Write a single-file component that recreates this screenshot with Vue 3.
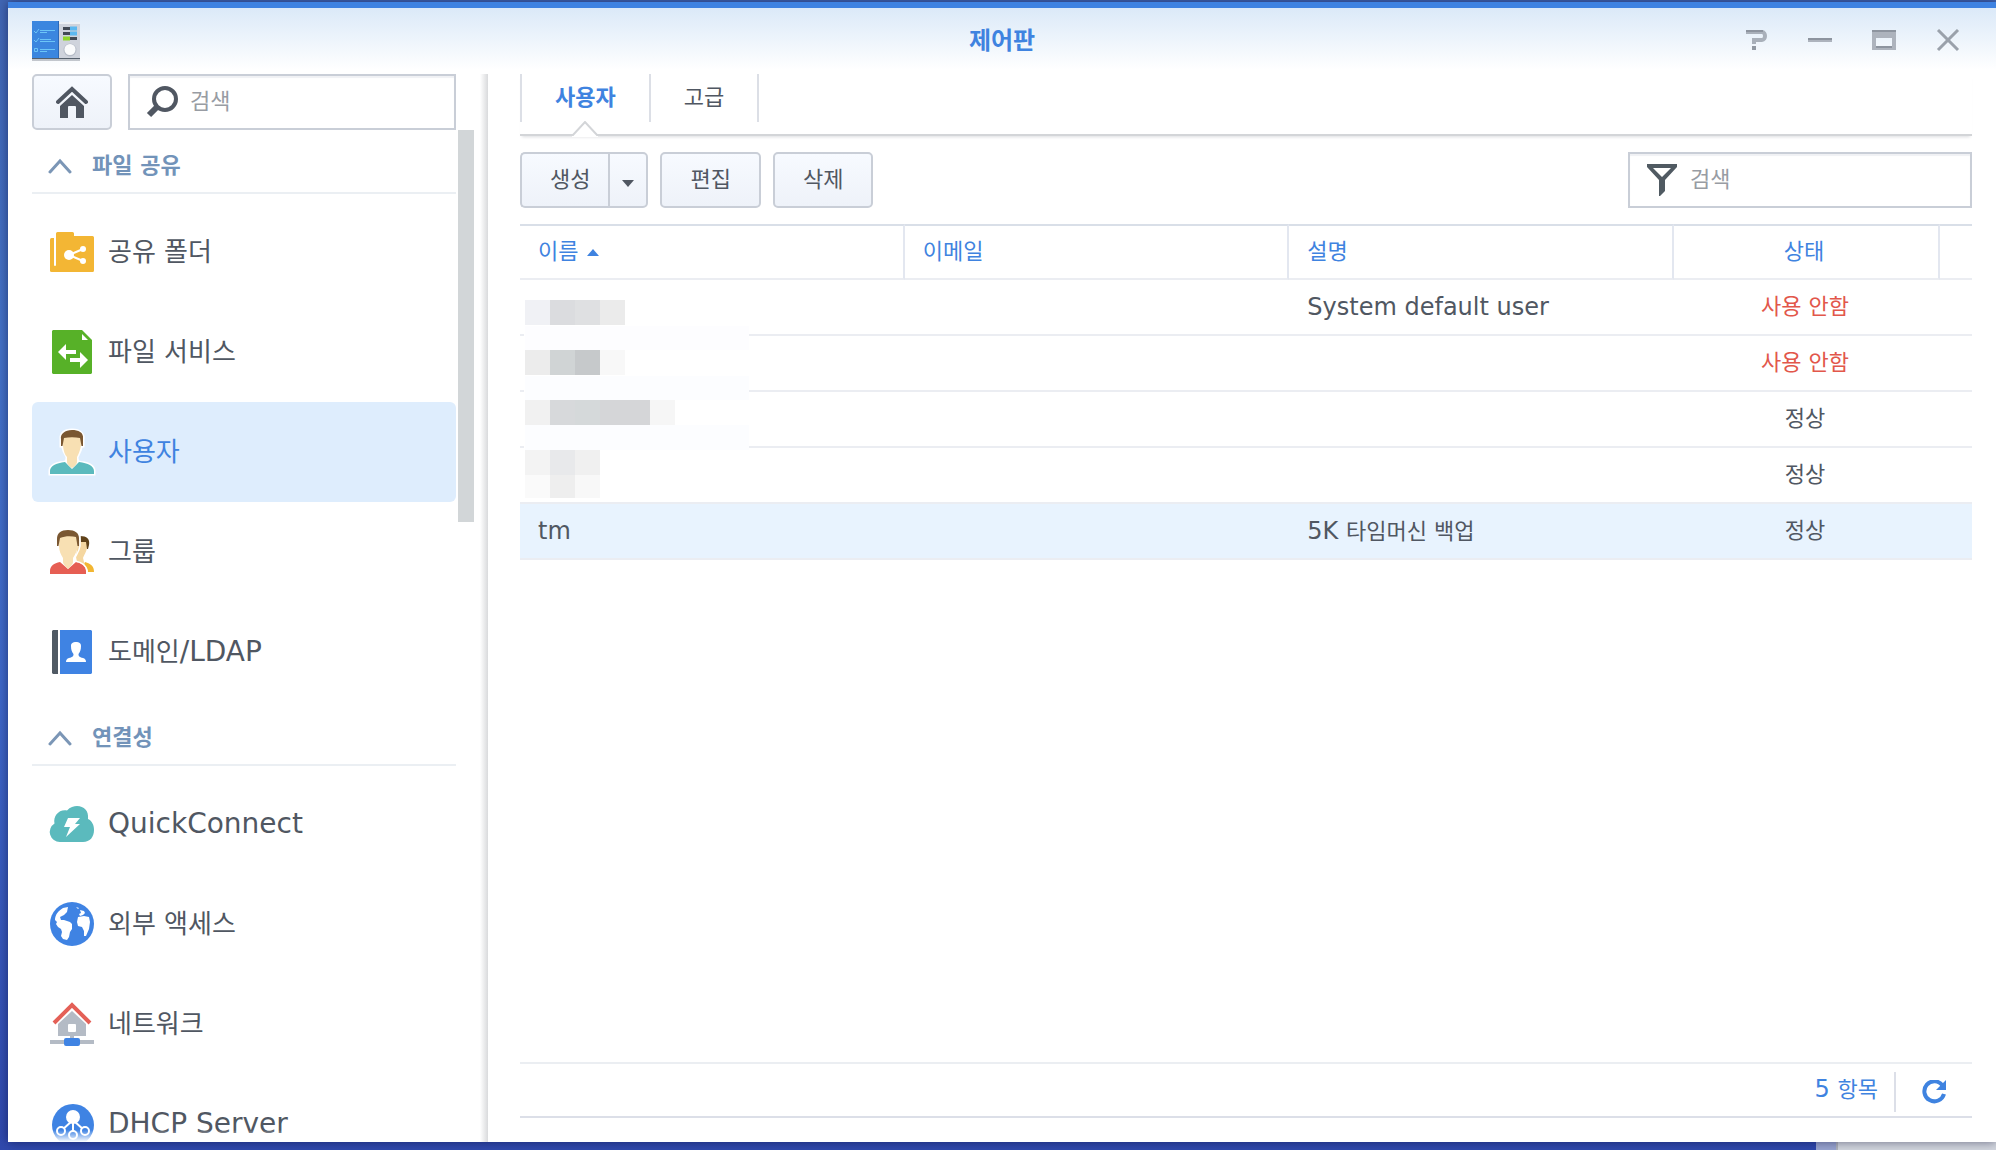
<!-- App.vue -->
<template>
  <div class="desktop">
    <!-- shared icon shapes -->
    <svg class="sprite" aria-hidden="true">
      <symbol id="icon-folder" viewBox="0 0 44 44">
        <rect x="0" y="8" width="8" height="34" rx="1.5" fill="#f3b634" />
        <path d="M6 3.5A1.5 1.5 0 0 1 7.500 2H22.500A1.500 1.500 0 0 1 24 3.500V6H42.500A1.500 1.500 0 0 1 44 7.500V40.500A1.500 1.500 0 0 1 42.500 42H6Z" fill="#f3b634" />
        <rect x="4" y="7" width="2" height="29" rx="1" fill="#fff" />
        <path d="M33 19L19 25L33 31" fill="none" stroke="#fff" stroke-width="2" />
        <circle cx="19" cy="25" r="5" fill="#fff" />
        <circle cx="33" cy="19" r="3" fill="#fff" />
        <circle cx="33" cy="31" r="3" fill="#fff" />
      </symbol>
      <symbol id="icon-file" viewBox="0 0 44 44">
        <path d="M3 0H32L42 10V43L41 44H3L2 43V1Z" fill="#57b128" />
        <path d="M32 4V10H38Z" fill="#fff" />
        <path d="M8 22L16 14V20H26V24H16V30Z" fill="#fff" />
        <path d="M38 30L30 38V32H20V28H30V22Z" fill="#fff" />
      </symbol>
      <symbol id="icon-user" viewBox="0 0 44 44">
        <path
          d="M11 10C10 3 15 0 22 0C30 0 34 4 33 10V16H31.500C30.500 21 28.500 24 27 27C27 31 28 32 31 32.500C39 33.500 44 36 44 41V44H0V41C0 36 5 33.500 13 32.500C16 32 17 31 17 27C15 24 13.500 21 12.500 16H11Z"
          fill="#fff" stroke="#fff" stroke-width="3"
        />
        <path d="M0 41C0 36 6 33 15 32L22 39L29 32C38 33 44 36 44 41V44H0Z" fill="#5bbabd" />
        <path d="M13 8C17 5 27 5 31 8V16C30 21 28 25 27 27V32C27 34 24 37 22 38C20 37 17 34 17 32V27C15 25 13.500 21 13 16Z" fill="#f8e0b3" />
        <path d="M11 16V9C10 4 15 0 22 0C28 0 34 2 33 9V16H31.500L30 8C25 7 19 7 14 8L12.500 16Z" fill="#7a5731" />
      </symbol>
      <symbol id="icon-group" viewBox="0 0 44 44">
        <path d="M28 10H37V18C36 23 34 25 33 28L34 32L38 40L27 32L26 27Z" fill="#f5d7a0" />
        <path d="M30 6C37 6 40 9 39 15L38 19H37L36 12H31Z" fill="#604219" />
        <path d="M35 32C41 34 44 36 44 42H38C38 38 36 36 34 35Z" fill="#f2b632" />
        <path d="M0 41C0 36 4 33 10 32L18 39L26 32C32 33 36 36 36 41V44H0Z" fill="#e65e53" />
        <path d="M9 8C13 5 24 5 28 8L28 16C27 21 25 25 23 28V32C23 34 20 37 18 39C16 37 13 34 13 32V28C11 25 9 21 9 16Z" fill="#f8e0b3" />
        <path d="M7 16V9C7 3 11 0 18 0C25 0 29 3 29 8V16H27.500L26 7C21 6 15 6 10 8L8.500 16Z" fill="#7a5731" />
        <path d="M30 5V16C29 22 26 25 25 28V31C31 32 36 34 37 41" fill="none" stroke="#fff" stroke-width="1.5" />
      </symbol>
      <symbol id="icon-domain" viewBox="0 0 44 44">
        <path d="M3 0H8V44H3L2 43V1Z" fill="#505a64" />
        <path d="M10 0H41L42 1V43L41 44H10Z" fill="#3f83e3" />
        <path d="M21 16C21 13 23 12 26 12C29 12 31 13 31 16C31 20 30 22 28.500 24C28.500 27 30 27 33 28C35 28.500 36 30 36 32H16C16 30 17 28.500 19 28C22 27 23.500 27 23.500 24C22 22 21 20 21 16Z" fill="#fff" />
      </symbol>
      <symbol id="icon-cloud" viewBox="0 0 44 44">
        <path d="M10 40A10 10 0 0 1 4.500 21.500C3 14 9 7 17 8.500C20 5 24 4 27 4C34 4 39 9 38 17C42 19 44 23 44 28C44 35 40 40 33 40Z" fill="#5bbabd" />
        <path d="M18 16H30L25 22H30L16 35L20 25H14Z" fill="#fff" />
      </symbol>
      <symbol id="icon-globe" viewBox="0 0 44 44">
        <circle cx="22" cy="22" r="22" fill="#3f83e3" />
        <path d="M18 5L13 6C8 9 5 13 5 18L7 20L6 22L8 25L11 27L12 30L11 34L13 37L17 38L19 35L20 30L22 27V22L20 20L14 18L11 18L10 15L14 13L17 10Z" fill="#fff" />
        <path d="M28 15L34 14L39 15L40 20L39 27L36 34L34 34L34 29L32 25L28 24L27 20Z" fill="#fff" />
        <path d="M26 5L29 6L28 7ZM30 8L34 9L35 11L33 13L30 14L29 12L31 11Z" fill="#fff" />
      </symbol>
      <symbol id="icon-network" viewBox="0 0 44 44">
        <path d="M22 9L36 22V34H24V38H44V42H0V38H20V34H8V22Z" fill="#b4bbc5" />
        <rect x="18" y="22" width="8" height="8" rx="1" fill="#fff" />
        <path d="M4 21L22 3L40 21" fill="none" stroke="#e46057" stroke-width="4" />
        <rect x="14" y="36" width="16" height="8" rx="2" fill="#3f83e3" />
      </symbol>
      <symbol id="icon-dhcp" viewBox="0 0 44 44">
        <circle cx="23" cy="23" r="21" fill="#3f83e3" />
        <path d="M23 15V33M23 18L11 29M23 18L35 29" stroke="#fff" stroke-width="2" />
        <circle cx="23" cy="15" r="7" fill="#fff" />
        <g fill="#3f83e3" stroke="#fff" stroke-width="2">
          <circle cx="11" cy="29" r="4" />
          <circle cx="35" cy="29" r="4" />
          <circle cx="23" cy="33" r="4" />
        </g>
      </symbol>
    </svg>

    <div class="window">
      <header class="titlebar">
        <svg class="app-icon" viewBox="0 0 48 40" aria-hidden="true">
          <rect x="0" y="37" width="48" height="3" fill="#8b929c" opacity="0.5" />
          <rect x="26" y="1" width="22" height="37" fill="#cfd3dc" />
          <rect x="26" y="1" width="22" height="2" fill="#eef1f5" />
          <rect x="0" y="0" width="27" height="38" fill="#3b86df" />
          <rect x="26" y="0" width="1" height="38" fill="#2b68b8" />
          <rect x="0" y="37" width="48" height="1" fill="#56606c" />
          <path d="M2 10L4 12L7 8M2 19L4 21L7 17M2.500 27.500H5.500V30.500H2.500Z" fill="none" stroke="#6cc5f7" />
          <path d="M8 9.500H23M8 11.500H15M8 18.500H19M8 20.500H23M8 28.500H23M8 30.500H15" stroke="#6cc5f7" />
          <path d="M31 7.500H39M31 12.500H39M38 17.500H45" stroke="#434a55" stroke-width="3" />
          <path d="M38 7.500H45M38 12.500H45" stroke="#5cb8f0" stroke-width="4" />
          <path d="M31 17.500H38" stroke="#8fd629" stroke-width="4" />
          <circle cx="38" cy="29" r="6.500" fill="#b7bdc8" />
          <circle cx="38" cy="28.500" r="5.500" fill="#fafbfc" />
        </svg>
        <h1 class="title">제어판</h1>
        <div class="controls">
          <button class="control" aria-label="도움말">
            <svg viewBox="0 1 24 24">
              <path d="M2 4H18C22 4 22 12 18 12H10V16" fill="none" stroke="#a9b0ba" stroke-width="4" />
              <path d="M2 3H19" stroke="#8d949f" stroke-width="2" />
              <rect x="8" y="18" width="4" height="4" fill="#9299a3" />
            </svg>
          </button>
          <button class="control" aria-label="최소화">
            <svg viewBox="0 1 24 24">
              <rect x="0" y="10" width="24" height="2" fill="#8d949f" />
              <rect x="0" y="12" width="24" height="2" fill="#adb3bd" />
            </svg>
          </button>
          <button class="control" aria-label="최대화">
            <svg viewBox="0 1 24 24">
              <path d="M0 2H24V22H0ZM4 10V20H20V10Z" fill="#adb3bd" fill-rule="evenodd" />
              <path d="M0 3H24M4 19H20" stroke="#8d949f" stroke-width="2" />
            </svg>
          </button>
          <button class="control" aria-label="닫기">
            <svg viewBox="0 1 24 24">
              <path d="M2 2L22 22M22 2L2 22" stroke="#9aa1ab" stroke-width="3" />
            </svg>
          </button>
        </div>
      </header>

      <div class="content">
        <aside class="sidebar">
          <div class="sidebar-top">
            <button class="button home" aria-label="홈">
              <svg viewBox="0 0 32 32">
                <path d="M2 16L16 3L30 16" fill="none" stroke="#505762" stroke-width="4" stroke-linecap="round" />
                <path d="M4 20L16 9L28 20V32H20V21Q20 20 19 20H13Q12 20 12 21V32H4Z" fill="#505762" />
              </svg>
            </button>
            <label class="search">
              <svg viewBox="0 0 32 32" aria-hidden="true">
                <circle cx="19" cy="13" r="11" fill="none" stroke="#505762" stroke-width="4" />
                <path d="M11 21L3 29" stroke="#505762" stroke-width="6" />
              </svg>
              <input v-model="query" type="text" placeholder="검색" aria-label="설정 검색">
            </label>
          </div>
          <div class="sidebar-scroll">
            <nav class="nav">
              <section v-for="section in sections" :key="section.title" class="section">
                <button class="section-header" @click="section.open = !section.open">
                  <svg viewBox="0 0 24 16" :class="{ closed: !section.open }" aria-hidden="true">
                    <path d="M2 14L12 3L22 14" />
                  </svg>
                  <span>{{ section.title }}</span>
                </button>
                <template v-if="section.open">
                  <a
                    v-for="item in section.items"
                    :key="item.icon"
                    href="#"
                    class="nav-item"
                    :class="{ active: item.icon === current }"
                    @click.prevent="current = item.icon"
                  >
                    <svg class="nav-icon" aria-hidden="true"><use :href="'#icon-' + item.icon" /></svg>
                    <span>{{ item.label }}<span v-if="item.latin" class="latin">{{ item.latin }}</span></span>
                  </a>
                </template>
              </section>
            </nav>
            <div class="track"><div class="thumb" /></div>
          </div>
        </aside>

        <main class="main">
          <div class="tabs">
            <button
              v-for="tab in tabs"
              :key="tab"
              class="tab"
              :class="{ active: tab === activeTab }"
              @click="activeTab = tab"
            >
              {{ tab }}
              <svg v-if="tab === activeTab" class="notch" viewBox="0 0 28 16" aria-hidden="true">
                <path d="M1 14L14 1L27 14V16H1Z" fill="#fff" />
                <path d="M0 14H2L14 1L26 14H28" fill="none" stroke="#d3d5d8" stroke-width="2" />
              </svg>
            </button>
          </div>

          <div class="toolbar">
            <div class="split">
              <button class="button create">생성</button>
              <button class="button arrow" aria-label="생성 메뉴"><i class="caret down" /></button>
            </div>
            <button class="button">편집</button>
            <button class="button">삭제</button>
            <label class="search filter">
              <svg viewBox="0 0 32 32" aria-hidden="true">
                <path d="M1 0H31V3L19 16V27L14 32H13V16L1 3ZM7 4L16 13L25 4Z" fill="#505a62" fill-rule="evenodd" />
              </svg>
              <input v-model="filter" type="text" placeholder="검색" aria-label="사용자 검색">
            </label>
          </div>

          <div class="grid">
            <table>
              <thead>
                <tr>
                  <th>이름<i class="caret up" /></th>
                  <th>이메일</th>
                  <th>설명</th>
                  <th class="status">상태</th>
                  <th class="filler" />
                </tr>
              </thead>
              <tbody>
                <tr
                  v-for="(user, i) in users"
                  :key="i"
                  :class="{ selected: i === selected }"
                  @click="selected = i"
                >
                  <td class="latin">{{ user.name }}</td>
                  <td />
                  <td><span class="latin">{{ user.latin }}</span>{{ user.description }}</td>
                  <td class="status" :class="{ disabled: user.disabled }">{{ user.disabled ? '사용 안함' : '정상' }}</td>
                  <td />
                </tr>
              </tbody>
            </table>
            <!-- hides the private account names -->
            <svg class="mosaic" viewBox="0 0 225 206" aria-hidden="true">
              <rect width="225" height="206" fill="#fff" />
              <rect
                v-for="(b, i) in blocks"
                :key="i"
                :x="b[0]"
                :y="b[1]"
                :width="b[2]"
                :height="b[3]"
                :fill="b[4]"
              />
            </svg>
          </div>

          <footer class="footer">
            <span class="count"><span class="latin">5 </span>항목</span>
            <button class="refresh" aria-label="새로 고침">
              <svg viewBox="0 0 24 24">
                <path d="M20.500 5.500A10 10 0 1 0 22 14" fill="none" stroke="#3f83e0" stroke-width="4" />
                <path d="M24 0V10H14Z" fill="#3f83e0" />
              </svg>
            </button>
          </footer>
        </main>
      </div>
    </div>
    <div class="behind" />
  </div>
</template>

<script setup>
import { reactive, ref } from 'vue'

const query = ref('')
const filter = ref('')
const current = ref('user')
const selected = ref(4)

const tabs = ['사용자', '고급']
const activeTab = ref(tabs[0])

const sections = reactive([
  {
    title: '파일 공유',
    open: true,
    items: [
      { icon: 'folder', label: '공유 폴더' },
      { icon: 'file', label: '파일 서비스' },
      { icon: 'user', label: '사용자' },
      { icon: 'group', label: '그룹' },
      { icon: 'domain', label: '도메인', latin: '/LDAP' }
    ]
  },
  {
    title: '연결성',
    open: true,
    items: [
      { icon: 'cloud', latin: 'QuickConnect' },
      { icon: 'globe', label: '외부 액세스' },
      { icon: 'network', label: '네트워크' },
      { icon: 'dhcp', latin: 'DHCP Server' }
    ]
  }
])

const users = [
  { latin: 'System default user', disabled: true },
  { disabled: true },
  {},
  {},
  { name: 'tm', latin: '5K ', description: '타임머신 백업' }
]

// x, y, width, height, fill
const blocks = [
  [1, 8, 25, 25, '#f0f1f5'],
  [26, 8, 25, 25, '#dbdcdf'],
  [51, 8, 25, 25, '#dfe0e2'],
  [76, 8, 25, 25, '#ebebeb'],
  [1, 34, 224, 24, '#fdfdff'],
  [1, 58, 25, 25, '#ececec'],
  [26, 58, 25, 25, '#d0d4d5'],
  [51, 58, 25, 25, '#c6c9cb'],
  [76, 58, 25, 25, '#f8f8f8'],
  [1, 84, 224, 24, '#fcfdff'],
  [1, 108, 25, 25, '#f1f1f1'],
  [26, 108, 25, 25, '#d7d9db'],
  [51, 108, 25, 25, '#d5d9da'],
  [76, 108, 50, 25, '#d5d6d8'],
  [126, 108, 25, 25, '#f6f6f6'],
  [1, 133, 224, 25, '#fcfdff'],
  [1, 158, 25, 25, '#f3f3f3'],
  [26, 158, 25, 25, '#e8e9eb'],
  [51, 158, 25, 25, '#f0f0f0'],
  [1, 183, 25, 23, '#fafafa'],
  [26, 183, 25, 23, '#eeeeee'],
  [51, 183, 25, 23, '#f8f8f8']
]
</script>

<style>
body {
  margin: 0;
}
</style>

<style scoped>
* {
  box-sizing: border-box;
}

.desktop {
  background: linear-gradient(#4166b4, #4472c6 30%, #3f68c8 60%, #3049ad);
  color: #505762;
  font-family: "DejaVu Sans", "Noto Sans CJK KR", sans-serif;
  font-size: 22px;
  height: 100vh;
  line-height: 32px;
  overflow: hidden;
  padding: 2px 0 8px 8px;
  position: relative;
}

.sprite {
  height: 0;
  position: absolute;
  width: 0;
}

symbol {
  overflow: visible;
}

button,
input {
  background: none;
  border: 0;
  color: inherit;
  font: inherit;
  padding: 0;
}

button {
  cursor: pointer;
}

svg {
  display: block;
  flex: none;
}

.latin {
  font-size: 24px;
  white-space: pre;
}

.window {
  background: #fff;
  border-top: 6px solid #3e82e1;
  box-shadow: 0 0 10px rgba(0, 0, 40, 0.5);
  display: flex;
  flex-direction: column;
  height: 100%;
  position: relative;
  z-index: 1;
}

/* strip of another window below this one */
.behind {
  background: #d3d7df;
  border-left: 20px solid #9aa6d2;
  bottom: 0;
  box-shadow: inset 2px 0 #b0b4bd;
  height: 8px;
  position: absolute;
  right: 0;
  width: 180px;
}

.titlebar {
  align-items: center;
  background: linear-gradient(#dbe9f8, #fff 62px);
  display: grid;
  grid-template-columns: 1fr auto 1fr;
  height: 66px;
  padding: 0 36px 0 24px;
}

.app-icon {
  height: 40px;
  width: 48px;
}

.title {
  color: #3f83e0;
  font-size: 24px;
  font-weight: bold;
  margin: 0 0 0 12px;
}

.controls {
  display: flex;
  gap: 40px;
  justify-content: flex-end;
}

.control {
  height: 24px;
  width: 24px;
}

.content {
  display: flex;
  flex: 1;
  min-height: 0;
}

.sidebar {
  background: linear-gradient(to left, #d9dadc, #fff 8px);
  display: flex;
  flex: none;
  flex-direction: column;
  padding: 0 14px 0 24px;
  width: 480px;
}

.sidebar-top {
  display: flex;
  gap: 16px;
  margin-right: 18px;
}

.button {
  background: linear-gradient(#f7faff, #eef2f9);
  border: 2px solid #c9ced7;
  border-radius: 5px;
  height: 56px;
  padding: 0 28px;
}

.home {
  display: flex;
  flex: none;
  justify-content: center;
  padding: 10px 0;
  width: 80px;
}

.home svg {
  height: 32px;
  width: 32px;
}

.search {
  align-items: center;
  border: 2px solid #c9ced7;
  box-shadow: inset 0 2px 1px #f0f1f4;
  display: flex;
  flex: 1;
  gap: 12px;
  height: 56px;
  min-width: 0;
  padding: 0 16px;
}

.search svg {
  height: 32px;
  width: 32px;
}

.search input {
  flex: 1;
  min-width: 0;
  outline: 0;
}

.search input::placeholder {
  color: #989ca3;
  opacity: 1;
}

.sidebar-scroll {
  display: flex;
  flex: 1;
  gap: 2px;
  min-height: 0;
  position: relative;
}

.sidebar-scroll::after {
  background: linear-gradient(rgba(255, 255, 255, 0), #fff);
  bottom: 0;
  content: "";
  height: 12px;
  left: 0;
  position: absolute;
  right: 0;
}

.nav {
  flex: 1;
  overflow: hidden;
}

.section-header {
  align-items: center;
  border-bottom: 2px solid #ebeff3;
  color: #7293b9;
  display: flex;
  font-weight: bold;
  gap: 20px;
  height: 64px;
  margin-bottom: 8px;
  padding: 10px 16px 0;
  width: 100%;
}

.section-header svg {
  fill: none;
  height: 16px;
  stroke: #7b96b6;
  stroke-linecap: round;
  stroke-width: 3;
  width: 24px;
}

.section-header .closed {
  transform: rotate(180deg);
}

.nav-item {
  align-items: center;
  border-radius: 6px;
  color: #505762;
  display: flex;
  font-size: 26px;
  gap: 14px;
  height: 100px;
  padding-left: 18px;
  text-decoration: none;
}

.nav-item .latin {
  font-size: 28px;
}

.nav-item.active {
  background: #deedfd;
  color: #3f83e0;
}

.nav-icon {
  height: 44px;
  overflow: visible;
  width: 44px;
}

.track {
  width: 16px;
}

.thumb {
  background: #d2d6d8;
  height: 392px;
}

.main {
  display: flex;
  flex: 1;
  flex-direction: column;
  min-width: 0;
  padding: 0 24px 24px 32px;
}

.tabs {
  border-bottom: 2px solid #d3d5d8;
  box-shadow: 0 3px 3px -2px #dcdde0;
  display: flex;
  height: 62px;
  padding-bottom: 12px;
}

.tab {
  border-left: 2px solid #dcdfe6;
  padding: 0 33px;
  position: relative;
}

.tab:last-child {
  border-right: 2px solid #dcdfe6;
}

.tab.active {
  color: #3f83e0;
  font-weight: bold;
}

.notch {
  height: 16px;
  left: calc(50% - 14px);
  position: absolute;
  top: 47px;
  width: 28px;
}

.toolbar {
  display: flex;
  gap: 12px;
  padding: 16px 0;
}

.split {
  display: flex;
}

.create {
  border-radius: 5px 0 0 5px;
  border-right: 0;
  padding-right: 18px;
}

.arrow {
  border-radius: 0 5px 5px 0;
  padding: 0 12px;
}

.caret {
  border: 6px solid transparent;
  display: inline-block;
  height: 0;
  width: 0;
}

.down {
  border-bottom: 0;
  border-top: 7px solid #505762;
}

.up {
  border-bottom: 7px solid #3f83e0;
  border-top: 0;
  margin-left: 9px;
  vertical-align: 3px;
}

.filter {
  flex: 0 0 344px;
  margin-left: auto;
}

.grid {
  flex: 1;
  position: relative;
}

table {
  border-collapse: separate;
  border-spacing: 0;
  table-layout: fixed;
  width: 100%;
}

th,
td {
  border-bottom: 2px solid #ebedf2;
  height: 56px;
  padding: 0 0 0 18px;
  text-align: left;
}

th {
  border-right: 2px solid #e3e7f0;
  border-top: 2px solid #d9dfe8;
  color: #3f83e0;
  font-weight: normal;
}

.status {
  padding: 0 4px 0 0;
  text-align: center;
  width: 266px;
}

.filler {
  border-right: 0;
  width: 32px;
}

.disabled {
  color: #e2574b;
}

.selected td {
  background: #e8f3fe;
}

.mosaic {
  height: 206px;
  left: 4px;
  position: absolute;
  top: 68px;
  width: 225px;
}

.footer {
  align-items: center;
  border-bottom: 2px solid #dcdfe8;
  border-top: 2px solid #ebeef2;
  color: #3f83e0;
  display: flex;
  height: 56px;
  justify-content: flex-end;
  padding-top: 4px;
}

.count {
  padding: 0 16px 6px 0;
}

.refresh {
  border-left: 2px solid #dcdfe8;
  height: 40px;
  padding: 0 26px;
}

.refresh svg {
  height: 24px;
  width: 24px;
}
</style>
